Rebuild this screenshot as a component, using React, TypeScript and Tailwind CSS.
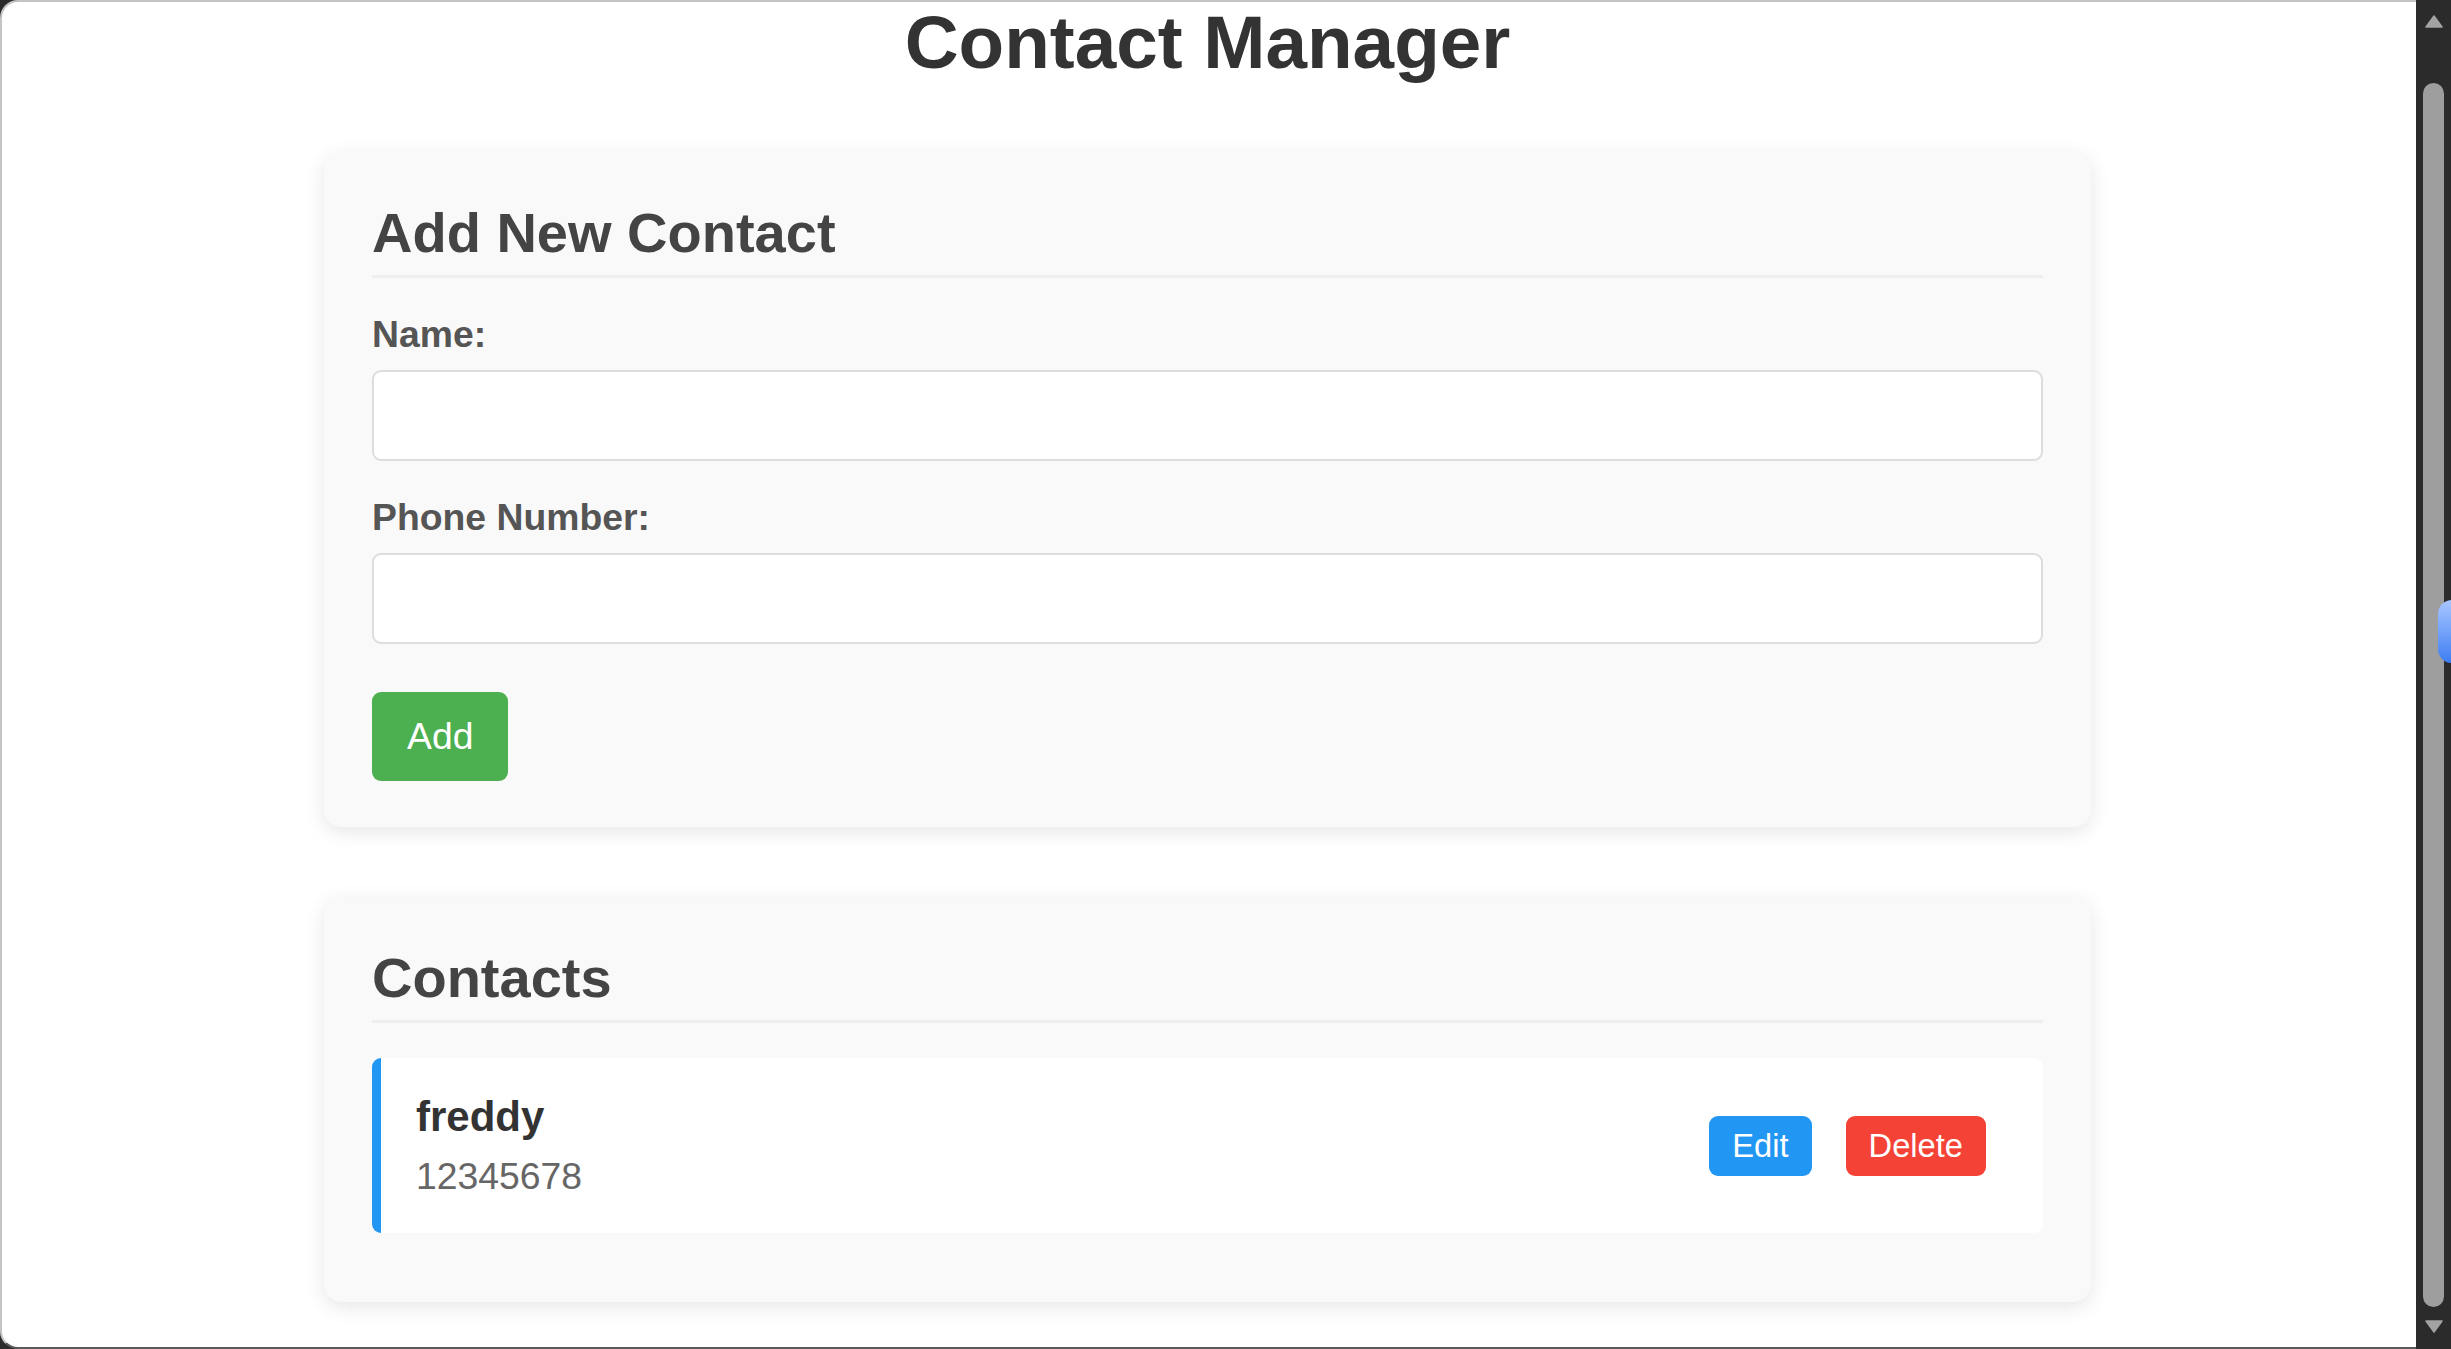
import * as React from "react";

type Contact = { id: number; name: string; phone: string };

const contacts: Contact[] = [{ id: 1, name: "freddy", phone: "12345678" }];

function Field({ label, className }: { label: string; className?: string }) {
  return (
    <div className={className}>
      <label className="mb-[14px] block text-[37.33px] font-bold leading-[normal] text-[#555]">
        {label}
      </label>
      <input
        type="text"
        className="block h-[91px] w-full rounded-[9px] border-2 border-[#ddd] bg-white px-[23px] text-[37.33px] outline-none"
      />
    </div>
  );
}

function ContactRow({ contact }: { contact: Contact }) {
  return (
    <div className="mb-[23px] flex items-center justify-between rounded-[9px] border-l-[9px] border-[#2196F3] bg-white py-[35px] pl-[35px] pr-[35px]">
      <div>
        <p className="mb-[14px] text-[42px] font-bold leading-[normal] text-[#333]">
          {contact.name}
        </p>
        <p className="text-[37.33px] leading-[normal] text-[#666]">{contact.phone}</p>
      </div>
      <div className="mr-[22px] flex items-center gap-[34px]">
        <button className="rounded-[9px] bg-[#2196F3] px-[23px] py-[11px] text-[32.67px] leading-[normal] text-white">
          Edit
        </button>
        <button className="rounded-[9px] bg-[#f44336] px-[23px] py-[11px] text-[32.67px] leading-[normal] text-white">
          Delete
        </button>
      </div>
    </div>
  );
}

function Scrollbar() {
  return (
    <div className="flex w-[35px] shrink-0 flex-col items-center bg-[#2b2b2b]">
      <svg width="18" height="13" viewBox="0 0 18 13" className="mt-[15px]">
        <path d="M9 1 L17 12 L1 12 Z" fill="#a3a3a3" stroke="#a3a3a3" strokeLinejoin="round" strokeWidth="1.5" />
      </svg>
      <div className="mt-[55px] h-[1224px] w-[21px] rounded-full bg-[#9e9e9e]" />
      <svg width="18" height="13" viewBox="0 0 18 13" className="mt-[13px]">
        <path d="M1 1 L17 1 L9 12 Z" fill="#a3a3a3" stroke="#a3a3a3" strokeLinejoin="round" strokeWidth="1.5" />
      </svg>
    </div>
  );
}

export default function App() {
  return (
    <div className="relative flex h-[1349px] w-full overflow-hidden bg-[#2b2b2b] font-['Liberation_Sans',Arial,sans-serif]">
      <main className="flex flex-1 flex-col items-center overflow-hidden rounded-l-[18px] border-b-2 border-l-2 border-t-2 border-b-[#5a5a5a] border-l-[#c4c4c4] border-t-[#c4c4c4] bg-white pr-[3px]">
        <h1 className="mb-[67px] mt-[-3px] text-[74.67px] font-bold leading-[normal] text-[#333]">
          Contact Manager
        </h1>

        <section className="w-[1767px] rounded-[18px] bg-[#f9f9f9] px-[48px] pb-[46px] pt-[48px] shadow-[0_5px_20px_rgba(0,0,0,0.1)]">
          <h2 className="mb-[35px] border-b-[3px] border-[#eee] pb-[10px] text-[56px] font-bold leading-[normal] text-[#444]">
            Add New Contact
          </h2>
          <Field label="Name:" className="mb-[35px]" />
          <Field label="Phone Number:" className="mb-[48px]" />
          <button className="rounded-[9px] bg-[#4CAF50] px-[35px] py-[23px] text-[37.33px] leading-[normal] text-white">
            Add
          </button>
        </section>

        <section className="mt-[70px] w-[1767px] rounded-[18px] bg-[#f9f9f9] px-[48px] pb-[46px] pt-[48px] shadow-[0_5px_20px_rgba(0,0,0,0.1)]">
          <h2 className="mb-[35px] border-b-[3px] border-[#eee] pb-[10px] text-[56px] font-bold leading-[normal] text-[#444]">
            Contacts
          </h2>
          {contacts.map((c) => (
            <ContactRow key={c.id} contact={c} />
          ))}
        </section>
      </main>
      <Scrollbar />
      <div className="absolute left-[2438px] top-[600px] h-[63px] w-[28px] rounded-full bg-gradient-to-b from-[#a9c6ff] to-[#3d7df2]" />
    </div>
  );
}
